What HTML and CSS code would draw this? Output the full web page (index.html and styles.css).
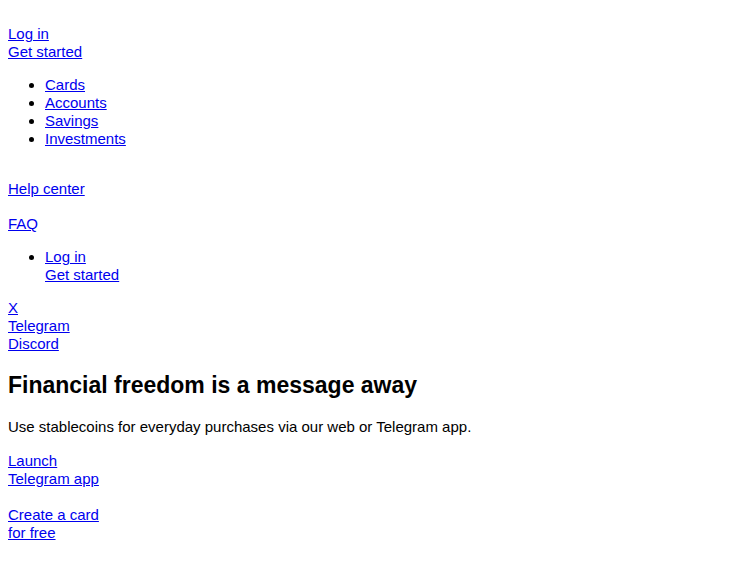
FILE: index.html
```html
<!DOCTYPE html>
<html lang="en">
<head>
    <meta charset="UTF-8">
    <title>Financial freedom is a message away</title>
    <link rel="stylesheet" href="styles.css">
</head>
<body>
<header class="header">
    <div class="auth">
        <a href="#" class="stack">Log in</a>
        <a href="#" class="stack">Get started</a>
    </div>
    <ul class="menu">
        <li><a href="#">Cards</a></li>
        <li><a href="#">Accounts</a></li>
        <li><a href="#">Savings</a></li>
        <li><a href="#">Investments</a></li>
    </ul>
    <div class="support">
        <p><a href="#">Help center</a></p>
        <p><a href="#">FAQ</a></p>
    </div>
    <ul class="menu">
        <li>
            <a href="#" class="stack">Log in</a>
            <a href="#" class="stack">Get started</a>
        </li>
    </ul>
    <div class="social">
        <a href="#" class="stack">X</a>
        <a href="#" class="stack">Telegram</a>
        <a href="#" class="stack">Discord</a>
    </div>
</header>
<main class="hero">
    <h2>Financial freedom is a message away</h2>
    <p>Use stablecoins for everyday purchases via our web or Telegram app.</p>
    <p>
        <a href="#" class="stack">Launch</a>
        <a href="#" class="stack">Telegram app</a>
    </p>
    <p class="cta">
        <a href="#" class="stack">Create a card</a>
        <a href="#" class="stack">for free</a>
    </p>
</main>
</body>
</html>
```
FILE: styles.css
```css
body{
    margin: 8px;
    font-family: "Liberation Sans", Arial, sans-serif;
    font-size: 15px;
    line-height: 18px;
    color: #000;
}
a{
    color: #0000ee;
}
.stack{
    display: block;
    width: max-content;
}
.auth{
    margin: 17px 0 15px;
}
.menu{
    margin: 15px 0;
    padding-left: 37px;
}
.support{
    margin-top: 32px;
}
.support p{
    margin: 17px 0 15px;
}
.hero h2{
    font-size: 23px;
    line-height: 27px;
    margin: 19px 0;
}
.hero p{
    margin: 16px 0;
}
.hero .cta{
    margin-top: 18px;
}
```
